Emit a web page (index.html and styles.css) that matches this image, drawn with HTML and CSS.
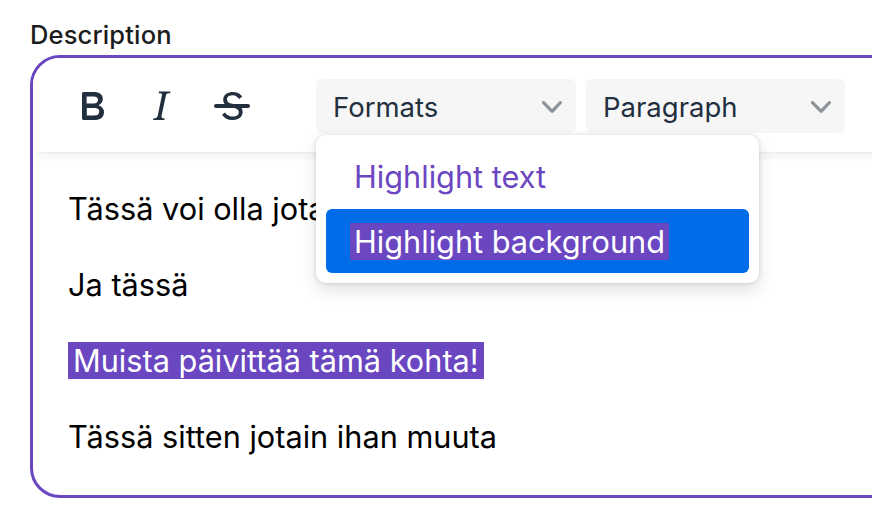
FILE: index.html
```html
<!DOCTYPE html>
<html lang="fi">
<head>
<meta charset="utf-8">
<title>Description editor</title>
<link rel="stylesheet" href="styles.css">
</head>
<body>
<div class="page">
  <div class="label">Description</div>
  <div class="editor">
    <div class="toolbar">
      <div class="btn-group">
        <button class="tbtn" title="Bold">
          <svg viewBox="0 0 24 24" width="48" height="48"><path d="M7.8 19c-.3 0-.5 0-.6-.2l-.2-.5V5.7c0-.2 0-.4.2-.5l.6-.2h5c1.5 0 2.7.3 3.5 1 .7.6 1.1 1.4 1.1 2.5a3 3 0 0 1-.6 1.9c-.4.6-1 1-1.6 1.2.4.1.9.3 1.3.6s.8.7 1 1.2c.4.4.5 1 .5 1.6 0 1.3-.4 2.3-1.3 3-.8.7-2.1 1-3.8 1H7.8zm5-8.3c.6 0 1.2-.1 1.6-.5.4-.3.6-.7.6-1.3 0-1.1-.8-1.700-2.3-1.7H9.3v3.5h3.4zm.5 6c.7 0 1.3-.1 1.7-.4.4-.4.6-.9.6-1.5s-.2-1-.7-1.4c-.4-.3-1-.4-2-.4H9.4v3.8h4z" fill-rule="evenodd"/></svg>
        </button>
        <button class="tbtn" title="Italic">
          <svg viewBox="0 0 24 24" width="48" height="48"><path d="M16.7 4.7l-.1.9h-.3c-.6 0-1 0-1.4.3-.3.3-.4.6-.5 1.1l-2.1 9.8v.6c0 .5.4.8 1.4.8h.2l-.2.8H8l.2-.8h.2c1.1 0 1.8-.5 2-1.5l2-9.8.1-.5c0-.6-.4-.8-1.4-.8h-.3l.2-.9h5.8z" fill-rule="evenodd"/></svg>
        </button>
        <button class="tbtn tbtn-strike" title="Strikethrough">
          <svg viewBox="0 0 24 24" width="48" height="48"><path d="M15.6 8.5c-.5-.7-1-1.1-1.3-1.3-.6-.4-1.3-.6-2-.6-2.7 0-2.8 1.7-2.8 2.1 0 1.6 1.8 2 3.2 2.3 4.4.9 4.6 2.8 4.6 3.900 0 1.4-.7 4.1-5 4.1A6.2 6.2 0 0 1 7 16.4l1.5-1.1c.4.6 1.6 2 3.7 2 1.6 0 2.5-.4 3-1.2.4-.8.3-2-.8-2.6-.7-.4-1.6-.7-2.9-1-1-.2-3.9-.8-3.9-3.6C7.6 6 10.3 5 12.4 5c2.9 0 4.2 1.6 4.7 2.3l-1.5 1.2z"/><path d="M4 11h16a1 1 0 0 1 0 2H4a1 1 0 0 1 0-2z"/></svg>
        </button>
      </div>
      <div class="select-group">
        <div class="select select-formats">
          <span class="select-label">Formats</span>
          <svg class="chevron" viewBox="0 0 10 10" width="20" height="20"><path d="M8.7 2.2c.3-.3.8-.3 1 0 .4.4.4.9 0 1.2L5.7 7.8c-.3.3-.9.3-1.2 0L.2 3.4a.8.8 0 0 1 0-1.2c.3-.3.8-.3 1.1 0L5 6l3.7-3.8z"/></svg>
          <div class="menu">
            <div class="menu-item"><span class="fmt fmt-text">Highlight text</span></div>
            <div class="menu-item menu-item-active"><span class="fmt fmt-bg">Highlight background</span></div>
          </div>
        </div>
        <div class="select select-block">
          <span class="select-label">Paragraph</span>
          <svg class="chevron" viewBox="0 0 10 10" width="20" height="20"><path d="M8.7 2.2c.3-.3.8-.3 1 0 .4.4.4.9 0 1.2L5.7 7.8c-.3.3-.9.3-1.2 0L.2 3.4a.8.8 0 0 1 0-1.2c.3-.3.8-.3 1.1 0L5 6l3.7-3.8z"/></svg>
        </div>
      </div>
    </div>
    <div class="content">
      <p>Tässä voi olla jotain tekstiä</p>
      <p>Ja tässä</p>
      <p><span class="hl">Muista päivittää tämä kohta!</span></p>
      <p>Tässä sitten jotain ihan muuta</p>
    </div>
  </div>
</div>
</body>
</html>
```

FILE: styles.css
```css
html, body {
  margin: 0;
  padding: 0;
  background: #ffffff;
  overflow: hidden;
}

.page {
  width: 872px;
  height: 530px;
  padding-left: 30px;
  box-sizing: border-box;
  overflow: hidden;
  font-family: Inter, "Liberation Sans", sans-serif;
}

.label {
  margin-top: 18px;
  height: 37px;
  font-size: 25.5px;
  line-height: 33px;
  font-weight: 500;
  color: #1c1c1c;
  letter-spacing: 0.15px;
}

.editor {
  width: 900px;
  height: 443px;
  box-sizing: border-box;
  border: 3px solid #6b46c1;
  border-radius: 30px;
  background: #ffffff;
}

.toolbar {
  position: relative;
  z-index: 2;
  display: flex;
  align-items: center;
  padding: 21px 0 19px 35px;
  background: #ffffff;
  border-top-left-radius: 27px;
  box-shadow: 0 2px 2px -2px rgba(34, 47, 62, 0.1), 0 8px 8px -4px rgba(34, 47, 62, 0.07);
}

.btn-group {
  display: flex;
  gap: 21px;
}

.tbtn {
  width: 48px;
  height: 48px;
  padding: 0;
  border: 0;
  background: transparent;
  display: flex;
  align-items: center;
  justify-content: center;
}

.tbtn svg {
  display: block;
  fill: #222f3e;
}

.tbtn-strike {
  margin-left: 2px;
}

.select-group {
  display: flex;
  gap: 10px;
  margin-left: 60px;
}

.select {
  position: relative;
  height: 54px;
  box-sizing: border-box;
  display: flex;
  align-items: center;
  justify-content: space-between;
  padding: 2px 14px 0 17px;
  background: #f6f6f7;
  border-radius: 6px;
  color: #222f3e;
  font-size: 27.5px;
}

.select-formats {
  width: 260px;
}

.select-block {
  width: 259px;
}

.chevron {
  display: block;
  fill: rgba(34, 47, 62, 0.5);
}

.menu {
  position: absolute;
  top: 56px;
  left: 0;
  width: 443px;
  box-sizing: border-box;
  padding: 9px 10px 10px;
  display: flex;
  flex-direction: column;
  gap: 1px;
  background: #ffffff;
  border-radius: 10px;
  box-shadow: 0 0 4px 0 rgba(34, 47, 62, 0.18), 0 8px 16px 0 rgba(34, 47, 62, 0.13);
  z-index: 5;
}

.menu-item {
  height: 64px;
  display: flex;
  align-items: center;
  padding-left: 24px;
  border-radius: 6px;
  font-size: 30.7px;
}

.menu-item-active {
  background: #006ce7;
}

.fmt {
  padding: 0 4px;
}

.fmt-text {
  color: #6b46c1;
}

.fmt-bg {
  color: #ffffff;
  background: #6b46c1;
}

.content {
  padding: 4px 35px 0;
  font-size: 30.7px;
  line-height: 46px;
  color: #000000;
}

.content p {
  margin: 30px 0;
  white-space: nowrap;
}

.hl {
  background: #6b46c1;
  color: #ffffff;
  padding: 0 5px;
}
```
